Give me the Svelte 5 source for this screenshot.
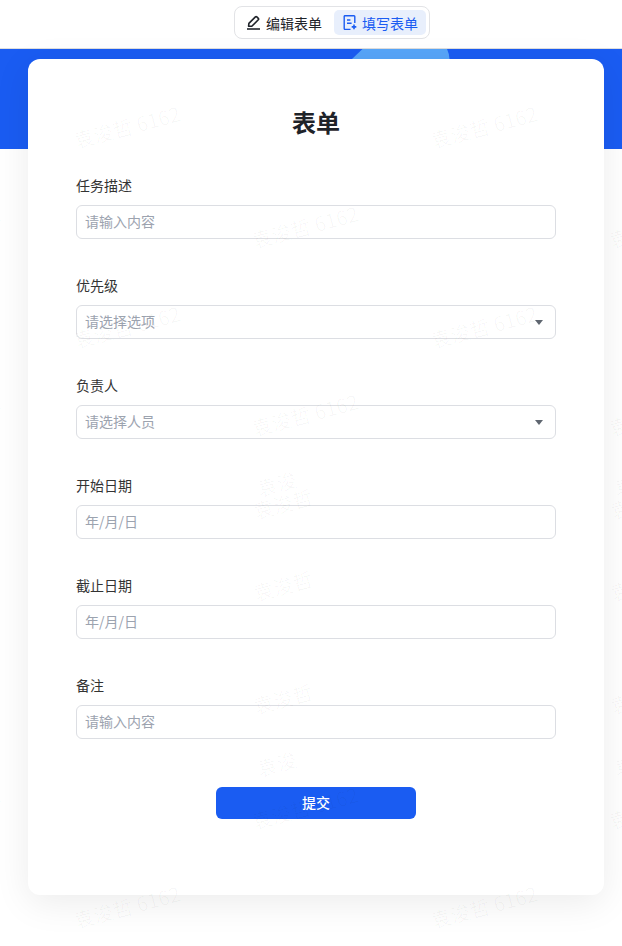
<script>
  let mode = $state('fill');

  const fields = [
    { label: '任务描述', type: 'input', placeholder: '请输入内容' },
    { label: '优先级', type: 'select', placeholder: '请选择选项' },
    { label: '负责人', type: 'select', placeholder: '请选择人员' },
    { label: '开始日期', type: 'input', placeholder: '年/月/日' },
    { label: '截止日期', type: 'input', placeholder: '年/月/日' },
    { label: '备注', type: 'input', placeholder: '请输入内容' }
  ];

  const full = '袁浚哲 6162';
  const name = '袁浚哲';
  const cut = '袁浚';

  // watermark centres, read off the screenshot
  const marks = [
    [127, 127, full], [484, 127, full],
    [-53, 227, full], [305, 227, full], [662, 227, full],
    [127, 327, full], [484, 327, full],
    [-53, 415, full], [305, 415, full], [662, 415, full],
    [277, 484, cut], [634, 484, cut],
    [283, 504, name], [640, 504, name],
    [283, 586, name], [640, 586, name],
    [283, 699, name], [640, 699, name],
    [277, 764, cut], [634, 764, cut],
    [305, 808, full], [662, 808, full], [-53, 808, full],
    [127, 907, full], [484, 907, full]
  ];
</script>

<div class="page">
  <header class="topbar">
    <div class="switch">
      <button class="tab" class:active={mode === 'edit'} onclick={() => (mode = 'edit')}>
        <svg width="16" height="16" viewBox="0 0 16 16" fill="none" stroke="currentColor" stroke-width="1.6">
          <path d="M2.6 11.2 2.9 8.4 9.4 1.9a1 1 0 0 1 1.4 0l1.5 1.5a1 1 0 0 1 0 1.4L5.8 11.3z" stroke-linejoin="round" />
          <path d="M1 14h13" stroke-width="1.8" stroke="#3c3f45" />
        </svg>
        编辑表单
      </button>
      <button class="tab" class:active={mode === 'fill'} onclick={() => (mode = 'fill')}>
        <svg width="16" height="16" viewBox="0 0 16 16" fill="none" stroke="currentColor" stroke-width="1.4">
          <path d="M8.5 14.4H3a.8.8 0 0 1-.8-.8V1.4A.8.8 0 0 1 3 .7h9a.8.8 0 0 1 .8.8v6.6" stroke-linejoin="round" />
          <path d="M5 5h3.4M5 8.2h4.6" />
          <path d="M12 9.6v4.6M9.7 11.9h4.6" stroke-width="1.6" />
        </svg>
        填写表单
      </button>
    </div>
  </header>

  <div class="hero">
    <svg class="blob" width="100" height="10" viewBox="0 0 100 10">
      <path d="M10.5 0 0 10h97.5Q97 4 95 0z" fill="#57a5f9" />
    </svg>
  </div>

  <main class="card">
    <h1>表单</h1>
    <form onsubmit={(e) => e.preventDefault()}>
      {#each fields as field}
        <div class="field">
          <label>
            <span class="label">{field.label}</span>
            {#if field.type === 'select'}
              <div class="select-wrap">
                <select>
                  <option value="">{field.placeholder}</option>
                </select>
                <svg class="caret" width="8" height="5" viewBox="0 0 8 5"><path d="M0 0h8L4 5z" fill="#5f6670" /></svg>
              </div>
            {:else}
              <input type="text" placeholder={field.placeholder} />
            {/if}
          </label>
        </div>
      {/each}
      <div class="actions">
        <button type="submit" class="submit">提交</button>
      </div>
    </form>
  </main>

  <div class="watermarks" aria-hidden="true">
    {#each marks as [x, y, text]}
      <span class="mark" style="left: {x}px; top: {y}px">{text}</span>
    {/each}
  </div>
</div>

<style>
  :global(body) {
    background: #fff;
    font-family: "Noto Sans CJK SC", "Noto Sans", sans-serif;
  }

  .page {
    position: relative;
    height: 946px;
    overflow: hidden;
    color: #1f2329;
    font-size: 14px;
  }

  .topbar {
    display: flex;
    justify-content: center;
    height: 42px;
    padding: 6px 0 0 42px;
    border-bottom: 1px solid #dedede;
  }

  .switch {
    display: flex;
    gap: 4px;
    height: 25px;
    padding: 3px;
    background: #fff;
    border: 1px solid #e2e3e6;
    border-radius: 8px;
  }

  .tab {
    display: flex;
    align-items: center;
    gap: 4px;
    height: 25px;
    padding: 0 8px;
    border: none;
    border-radius: 5px;
    background: none;
    color: #1f2329;
    font: inherit;
    line-height: 20px;
    cursor: pointer;
  }

  .tab.active {
    background: #e8effc;
    color: #1a5cf2;
  }

  .hero {
    position: relative;
    height: 100px;
    background: #1a5cf2;
  }

  .blob {
    position: absolute;
    left: 352px;
    top: 0;
  }

  .card {
    position: relative;
    box-sizing: border-box;
    width: 576px;
    height: 836px;
    margin: -90px 0 0 28px;
    padding: 47px 48px 48px;
    background: #fff;
    border-radius: 12px;
    box-shadow: 0 8px 36px rgba(0, 0, 0, 0.08);
  }

  h1 {
    margin: 0 0 38px;
    font-size: 24px;
    line-height: 32px;
    font-weight: 700;
    text-align: center;
  }

  .field {
    height: 100px;
  }

  .label {
    display: block;
    margin-bottom: 11px;
    line-height: 18px;
    color: #333;
  }

  input,
  select {
    display: block;
    box-sizing: border-box;
    width: 100%;
    height: 34px;
    padding: 0 8px 2px;
    border: 1px solid #dcdee3;
    border-radius: 6px;
    background: transparent;
    font: inherit;
    color: #9ca3af;
    outline: none;
  }

  input::placeholder {
    color: #9ca3af;
    opacity: 1;
  }

  select {
    appearance: none;
  }

  .select-wrap {
    position: relative;
  }

  .caret {
    position: absolute;
    right: 13px;
    top: 15px;
    pointer-events: none;
  }

  .actions {
    display: flex;
    justify-content: center;
    margin-top: 11px;
  }

  .submit {
    width: 200px;
    height: 32px;
    padding: 0 0 2px;
    border: none;
    border-radius: 6px;
    background: #1a5cf2;
    color: #fff;
    font: inherit;
    font-weight: 500;
    cursor: pointer;
  }

  .watermarks {
    position: absolute;
    inset: 0;
    pointer-events: none;
  }

  .mark {
    position: absolute;
    transform: translate(-50%, -50%) rotate(-15deg);
    white-space: nowrap;
    font-size: 20px;
    line-height: 28px;
    color: rgba(0, 0, 0, 0.032);
  }
</style>
